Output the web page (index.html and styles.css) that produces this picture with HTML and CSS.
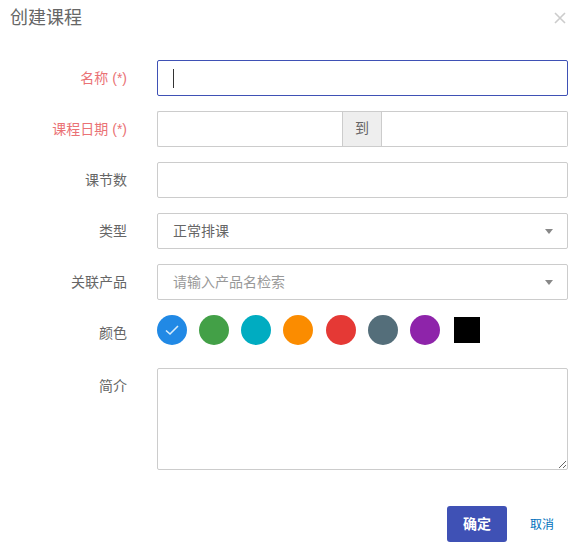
FILE: index.html
```html
<!DOCTYPE html>
<html lang="zh-CN">
<head>
    <meta charset="UTF-8">
    <meta name="viewport" content="width=device-width, initial-scale=1.0">
    <title>创建课程</title>
    <link rel="stylesheet" href="styles.css">
</head>
<body>
    <div class="modal">
        <div class="modal-header">
            <h4 class="modal-title">创建课程</h4>
            <svg class="modal-close" width="12" height="12" viewBox="0 0 12 12">
                <path d="M1 1L11 11M11 1L1 11" stroke="#ccc" stroke-width="1.6" fill="none"/>
            </svg>
        </div>

        <form class="course-form">
            <div class="form-row">
                <label class="form-label required" for="name">名称 (*)</label>
                <div class="caret-wrap">
                    <input type="text" id="name" class="form-input is-focused">
                    <span class="caret"></span>
                </div>
            </div>
            <div class="form-row">
                <label class="form-label required">课程日期 (*)</label>
                <div class="date-group">
                    <input type="text" class="form-input date-start">
                    <span class="date-addon">到</span>
                    <input type="text" class="form-input date-end">
                </div>
            </div>
            <div class="form-row">
                <label class="form-label" for="count">课节数</label>
                <input type="text" id="count" class="form-input">
            </div>
            <div class="form-row">
                <label class="form-label">类型</label>
                <div class="form-input form-select">
                    <span class="select-text">正常排课</span>
                    <i class="select-arrow"></i>
                </div>
            </div>
            <div class="form-row">
                <label class="form-label">关联产品</label>
                <div class="form-input form-select is-placeholder">
                    <span class="select-text">请输入产品名检索</span>
                    <i class="select-arrow"></i>
                </div>
            </div>
            <div class="form-row color-row">
                <label class="form-label">颜色</label>
                <div class="color-list">
                    <span class="color-dot dot-blue">
                        <svg width="16" height="12" viewBox="0 0 16 12">
                            <path d="M2 6.5L6 10L14 2" stroke="#d6ecfb" stroke-width="1.6" fill="none"/>
                        </svg>
                    </span>
                    <span class="color-dot dot-green"></span>
                    <span class="color-dot dot-cyan"></span>
                    <span class="color-dot dot-orange"></span>
                    <span class="color-dot dot-red"></span>
                    <span class="color-dot dot-slate"></span>
                    <span class="color-dot dot-purple"></span>
                    <span class="color-square"></span>
                </div>
            </div>
            <div class="form-row intro-row">
                <label class="form-label" for="intro">简介</label>
                <textarea id="intro" class="form-input form-textarea"></textarea>
            </div>
            <div class="form-actions">
                <button type="button" class="btn-confirm">确定</button>
                <button type="button" class="btn-cancel">取消</button>
            </div>
        </form>
    </div>
</body>
</html>
```

FILE: styles.css
```css
* {
    box-sizing: border-box;
}

body {
    margin: 0;
    background-color: #fff;
    font-family: "Liberation Sans", "Noto Sans CJK SC", sans-serif;
    font-size: 14px;
    color: #666;
}

.modal {
    width: 585px;
    height: 553px;
    padding-right: 17px;
}

.modal-header {
    display: flex;
    justify-content: space-between;
    align-items: center;
    height: 36px;
    padding-left: 10px;
    margin-bottom: 24px;
}

.modal-title {
    margin: 0 0 4px;
    font-size: 18px;
    font-weight: normal;
    color: #666;
}

.modal-close {
    margin-right: 2px;
}

.form-row {
    display: grid;
    grid-template-columns: 127px 411px;
    column-gap: 30px;
    align-items: center;
    margin-bottom: 15px;
}

.form-label {
    text-align: right;
    line-height: 36px;
}

.required {
    color: #ea7275;
}

.form-input {
    display: block;
    width: 100%;
    height: 36px;
    padding: 0 15px;
    border: 1px solid #ccc;
    border-radius: 2px;
    background-color: #fff;
    font-family: inherit;
    font-size: 14px;
    color: #666;
    outline: none;
}

.is-focused {
    border-color: #3f51b5;
}

.caret-wrap {
    position: relative;
}

.caret {
    position: absolute;
    top: 9px;
    left: 16px;
    width: 1px;
    height: 19px;
    background-color: #333;
}

.date-group {
    display: flex;
}

.date-start {
    flex: 0 0 185px;
    border-right: none;
    border-radius: 2px 0 0 2px;
}

.date-end {
    flex: 1;
    min-width: 0;
    border-left: none;
    border-radius: 0 2px 2px 0;
}

.date-addon {
    flex: 0 0 40px;
    border: 1px solid #ccc;
    background-color: #eee;
    text-align: center;
    line-height: 32px;
}

.form-select {
    display: flex;
    justify-content: space-between;
    align-items: center;
    padding-right: 14px;
}

.select-text {
    margin-bottom: 2px;
}

.is-placeholder {
    color: #999;
}

.select-arrow {
    width: 0;
    height: 0;
    border-left: 4px solid transparent;
    border-right: 4px solid transparent;
    border-top: 5px solid #888;
}

.color-row {
    margin-bottom: 17px;
}

.color-list {
    display: flex;
    align-self: start;
    align-items: center;
    gap: 12px;
    height: 30px;
}

.color-dot {
    display: flex;
    justify-content: center;
    align-items: center;
    flex: none;
    width: 30px;
    height: 30px;
    border-radius: 50%;
}

.dot-blue {
    background-color: #2189e5;
}

.dot-green {
    background-color: #43a047;
}

.dot-cyan {
    background-color: #00acc1;
}

.dot-orange {
    background-color: #fb8c00;
}

.dot-red {
    margin-left: 1px;
    background-color: #e53935;
}

.dot-slate {
    background-color: #546e7a;
}

.dot-purple {
    background-color: #8e24aa;
}

.color-square {
    flex: none;
    width: 26px;
    height: 26px;
    margin-left: 2px;
    background-color: #000;
}

.intro-row {
    align-items: start;
    margin-bottom: 36px;
}

.form-textarea {
    height: 102px;
    padding: 8px 15px;
    resize: vertical;
}

.form-actions {
    display: flex;
    justify-content: flex-end;
    align-items: center;
}

.btn-confirm {
    width: 60px;
    height: 36px;
    padding: 0 0 2px;
    border: none;
    border-radius: 3px;
    background-color: #3f51b5;
    color: #fff;
    font-family: inherit;
    font-size: 14px;
    font-weight: bold;
}

.btn-cancel {
    width: 61px;
    height: 36px;
    padding: 0 0 2px 9px;
    border: none;
    background: none;
    color: #0071bc;
    font-family: inherit;
    font-size: 12px;
}
```
